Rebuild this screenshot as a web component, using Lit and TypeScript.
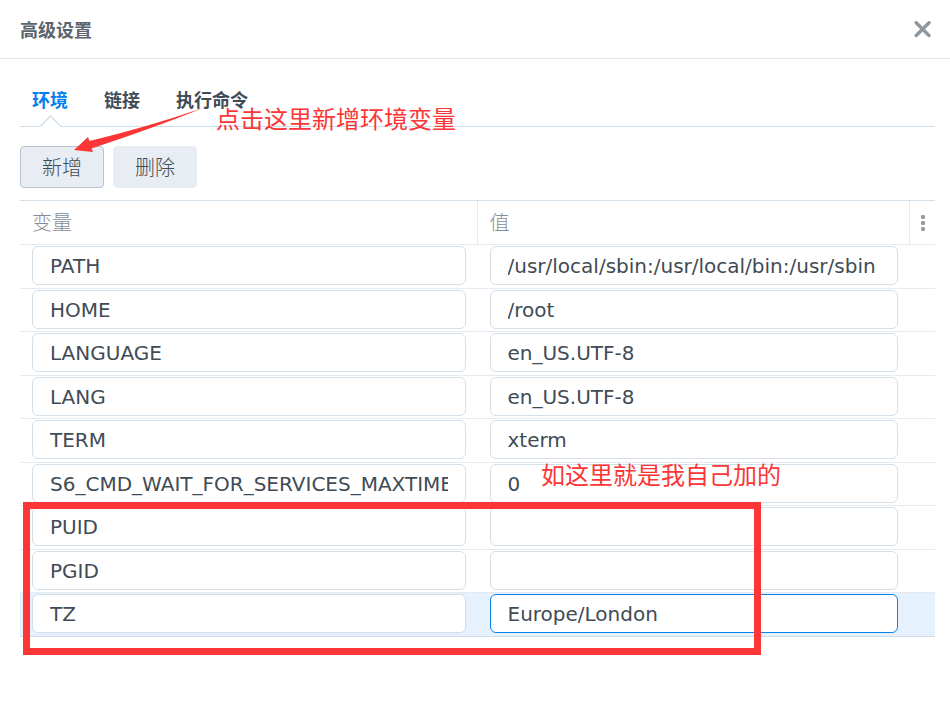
import { LitElement, html, css } from "lit";
import { customElement, property, state } from "lit/decorators.js";
import { classMap } from "lit/directives/class-map.js";

interface Variable {
  name: string;
  value: string;
}

const VARIABLES: Variable[] = [
  { name: "PATH", value: "/usr/local/sbin:/usr/local/bin:/usr/sbin" },
  { name: "HOME", value: "/root" },
  { name: "LANGUAGE", value: "en_US.UTF-8" },
  { name: "LANG", value: "en_US.UTF-8" },
  { name: "TERM", value: "xterm" },
  { name: "S6_CMD_WAIT_FOR_SERVICES_MAXTIME", value: "0" },
  { name: "PUID", value: "" },
  { name: "PGID", value: "" },
  { name: "TZ", value: "Europe/London" },
];

@customElement("variable-table")
export class VariableTable extends LitElement {
  @property({ attribute: false }) rows: Variable[] = [];
  @property({ type: Number }) selected = -1;

  static styles = css`
    :host {
      display: block;
    }
    .grid {
      width: 100%;
      table-layout: fixed;
      border-collapse: separate;
      border-spacing: 0;
      border-top: 1px solid #d3e0ea;
    }
    .col-name {
      width: 50%;
    }
    .col-menu {
      width: 25px;
    }
    th {
      box-sizing: border-box;
      height: 44px;
      padding: 0 12px 2px;
      border-bottom: 1px solid #e3eaf1;
      border-right: 1px solid #e3eaf1;
      color: #868c93;
      font-size: 20px;
      font-weight: 300;
      line-height: 28px;
      text-align: left;
    }
    .menu-cell {
      padding: 0;
      border-right: 0;
    }
    .menu {
      display: flex;
      align-items: center;
      justify-content: center;
      width: 100%;
      height: 28px;
      padding: 0;
      border: 0;
      background: none;
    }
    td {
      box-sizing: border-box;
      height: 44px;
      padding: 1px 12px 0;
      border-bottom: 1px solid #e3eaf1;
      vertical-align: top;
    }
    tr:nth-child(even) td {
      height: 43px;
    }
    .selected td {
      background: #e5f1fd;
      border-bottom-color: #cfdde9;
    }
    .field {
      display: block;
      box-sizing: border-box;
      width: 100%;
      height: 39px;
      padding: 0 17px;
      border: 1px solid #d3dfe9;
      border-radius: 6px;
      outline: 0;
      background: #fff;
      color: #414b55;
      font-family: "DejaVu Sans", "Noto Sans CJK SC", sans-serif;
      font-size: 20px;
    }
    .field.active {
      border-color: #0a84e8;
    }
  `;

  render() {
    return html`
      <table class="grid">
        <colgroup>
          <col class="col-name" />
          <col />
          <col class="col-menu" />
        </colgroup>
        <thead>
          <tr>
            <th scope="col">变量</th>
            <th scope="col">值</th>
            <th class="menu-cell">
              <button class="menu" aria-label="列选项">
                <svg width="4" height="16" viewBox="0 0 4 16" fill="#979ca2">
                  <rect width="4" height="4" rx="1.2" />
                  <rect y="6" width="4" height="4" rx="1.2" />
                  <rect y="12" width="4" height="4" rx="1.2" />
                </svg>
              </button>
            </th>
          </tr>
        </thead>
        <tbody>
          ${this.rows.map((row, i) => {
            const selected = i === this.selected;
            return html`
              <tr class=${classMap({ selected })}>
                <td><input class="field" aria-label="变量" .value=${row.name} /></td>
                <td>
                  <input
                    class=${classMap({ field: true, active: selected })}
                    aria-label="值"
                    .value=${row.value}
                  />
                </td>
                <td></td>
              </tr>
            `;
          })}
        </tbody>
      </table>
    `;
  }
}

@customElement("app-root")
export class AppRoot extends LitElement {
  @state() private tab = 0;

  static styles = css`
    :host {
      display: block;
      position: relative;
      min-height: 100vh;
      background: #fff;
      color: #414b55;
      font-family: "Noto Sans CJK SC", sans-serif;
    }
    button {
      font-family: inherit;
      cursor: pointer;
    }
    .header {
      display: flex;
      align-items: center;
      justify-content: space-between;
      box-sizing: border-box;
      height: 59px;
      padding: 0 19px 0 20px;
      border-bottom: 1px solid #dfe8f0;
    }
    .title {
      margin: 0;
      color: #5a646e;
      font-size: 18px;
      font-weight: 700;
      line-height: 28px;
    }
    .close {
      display: flex;
      padding: 0;
      border: 0;
      background: none;
    }
    .content {
      padding: 20px 15px 0 20px;
    }
    .tabs {
      display: flex;
      gap: 36px;
      box-sizing: border-box;
      height: 48px;
      padding: 0 12px;
      border-bottom: 1px solid #d0dfe9;
    }
    .tab {
      position: relative;
      padding: 0 0 8px;
      border: 0;
      background: none;
      color: #414b55;
      font-size: 18px;
      font-weight: 700;
      line-height: 28px;
    }
    .tab.current {
      color: #057feb;
    }
    .notch {
      position: absolute;
      left: 8px;
      bottom: -1px;
    }
    .toolbar {
      display: flex;
      gap: 9px;
      padding: 19px 0 12px;
    }
    .action {
      box-sizing: border-box;
      width: 84px;
      height: 42px;
      padding: 0;
      border: 1px solid #e8edf4;
      border-radius: 4px;
      background: #e8edf4;
      color: #414b55;
      font-size: 20px;
      font-weight: 300;
      line-height: 28px;
    }
    .action.pressed {
      border-color: #b8c3cf;
    }
    .arrow,
    .note,
    .frame {
      position: absolute;
      pointer-events: none;
    }
    .arrow {
      left: 74px;
      top: 107px;
    }
    .note {
      margin: 0;
      color: #fc3636;
      font-size: 24px;
      line-height: 32px;
      white-space: nowrap;
    }
    .note-add {
      left: 216px;
      top: 102px;
    }
    .note-own {
      left: 541px;
      top: 458px;
    }
    .frame {
      box-sizing: border-box;
      left: 23px;
      top: 502px;
      width: 738px;
      height: 153px;
      border: 7px solid #fc3636;
    }
  `;

  render() {
    const tabs = ["环境", "链接", "执行命令"];
    return html`
      <header class="header">
        <h1 class="title">高级设置</h1>
        <button class="close" aria-label="关闭">
          <svg
            width="17"
            height="17"
            viewBox="0 0 17 17"
            fill="none"
            stroke="#8f979f"
            stroke-width="3.4"
            stroke-linecap="round"
          >
            <path d="M2.200 1.700 15 14.500M15 1.700 2.200 14.500" />
          </svg>
        </button>
      </header>
      <main class="content">
        <div class="tabs" role="tablist">
          ${tabs.map(
            (label, i) => html`
              <button
                class=${classMap({ tab: true, current: i === this.tab })}
                role="tab"
                aria-selected=${i === this.tab}
                @click=${() => (this.tab = i)}
              >
                ${label}
                ${i === this.tab
                  ? html`<svg class="notch" width="21" height="12" viewBox="0 0 21 12">
                      <path d="M0 12 0 11.5 10.5 1 21 11.5V12Z" fill="#fff" />
                      <path d="M0 11.5 10.5 1 21 11.5" fill="none" stroke="#d0dfe9" stroke-width="1.3" />
                    </svg>`
                  : ""}
              </button>
            `,
          )}
        </div>
        <div class="toolbar">
          <button class="action pressed">新增</button>
          <button class="action">删除</button>
        </div>
        <variable-table .rows=${VARIABLES} .selected=${8}></variable-table>
      </main>
      <svg class="arrow" width="130" height="46" viewBox="0 0 130 46" fill="#fc3636">
        <path d="M0 43 14 30 15.500 34 Q70 21 129 1 Q85 19 17.500 41.500L19 45Z" />
      </svg>
      <p class="note note-add">点击这里新增环境变量</p>
      <p class="note note-own">如这里就是我自己加的</p>
      <div class="frame"></div>
    `;
  }
}
